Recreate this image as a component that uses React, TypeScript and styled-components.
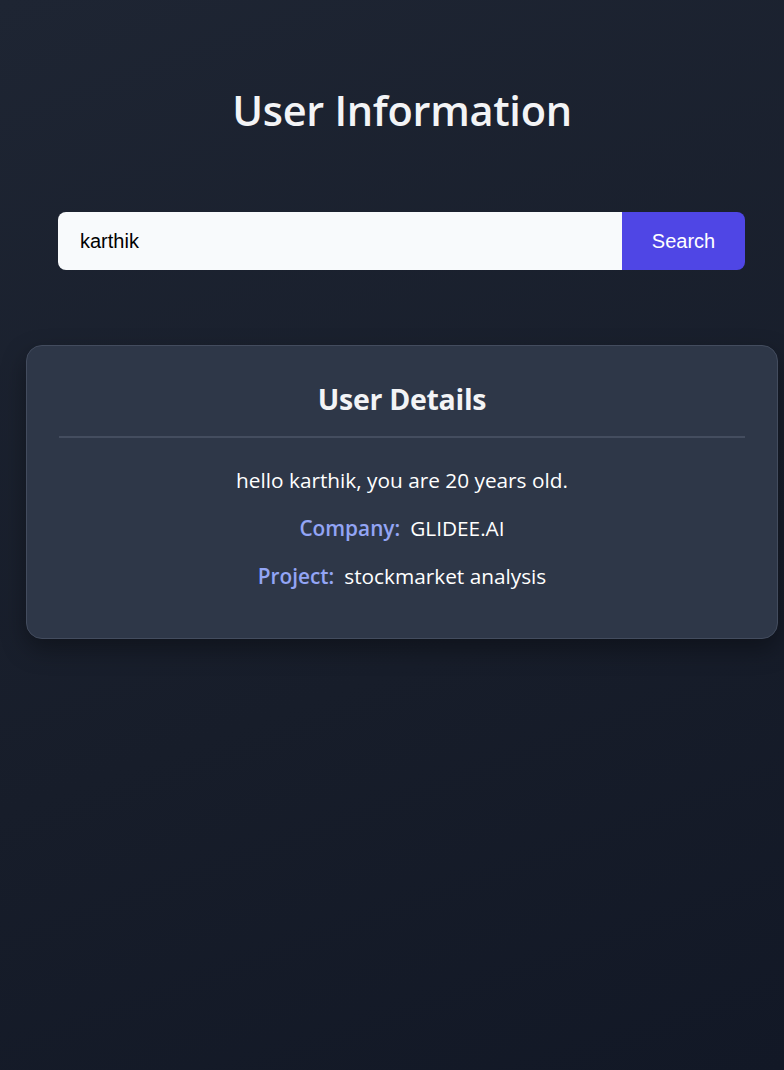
import styled, { createGlobalStyle } from "styled-components";
import { useState } from "react";

const GlobalStyle = createGlobalStyle`
  html, body {
    margin: 0;
    padding: 0;
  }
  body {
    min-height: 1070px;
    background: linear-gradient(160deg, #1e2533 0%, #171d2a 60%, #121826 100%);
    font-family: "Open Sans", "Noto Sans", sans-serif;
    color: #f3f4f6;
  }
`;

const Page = styled.div`
  width: 752px;
  margin-left: 26px;
  padding-top: 84px;
`;

const Title = styled.h1`
  margin: 0;
  text-align: center;
  font-size: 41.5px;
  font-weight: 600;
  line-height: 52px;
  color: #f3f4f6;
  letter-spacing: -0.3px;
`;

const SearchForm = styled.form`
  display: flex;
  height: 58px;
  margin: 76px 33px 0 32px;
  border-radius: 8px;
  overflow: hidden;
`;

const SearchInput = styled.input`
  flex: 1;
  border: 0;
  outline: none;
  background-color: #f8fafc;
  padding: 0 22px;
  font-family: "Liberation Sans", Arial, sans-serif;
  font-size: 20px;
  color: #000;
`;

const SearchButton = styled.button`
  width: 123px;
  border: 0;
  background-color: #4f46e5;
  color: #ffffff;
  font-family: "Liberation Sans", Arial, sans-serif;
  font-size: 20px;
  cursor: pointer;
`;

const Card = styled.div`
  margin-top: 75px;
  background-color: #2e3748;
  border: 1px solid #434c5e;
  border-radius: 16px;
  padding: 30px 32px 46px;
  box-shadow: 0 10px 24px rgba(0, 0, 0, 0.35);
`;

const CardTitle = styled.h2`
  margin: 0;
  text-align: center;
  font-size: 28.5px;
  font-weight: 700;
  line-height: 46px;
  padding-bottom: 14px;
  border-bottom: 2px solid #444d5f;
  letter-spacing: -0.3px;
`;

const Line = styled.p<{ $first?: boolean }>`
  margin: ${(p) => (p.$first ? "26px" : "16px")} 0 0;
  text-align: center;
  font-size: 20.8px;
  line-height: 32px;
  color: #ffffff;
`;

const Label = styled.span`
  color: #93a5f5;
  font-weight: 600;
  margin-right: 10px;
`;

const App = () => {
  const [name, setName] = useState("karthik");

  return (
    <>
      <GlobalStyle />
      <Page>
        <Title>User Information</Title>
        <SearchForm onSubmit={(e) => e.preventDefault()}>
          <SearchInput value={name} onChange={(e) => setName(e.target.value)} />
          <SearchButton type="submit">Search</SearchButton>
        </SearchForm>
        <Card>
          <CardTitle>User Details</CardTitle>
          <Line $first>hello karthik, you are 20 years old.</Line>
          <Line>
            <Label>Company:</Label>GLIDEE.AI
          </Line>
          <Line>
            <Label>Project:</Label>stockmarket analysis
          </Line>
        </Card>
      </Page>
    </>
  );
};

export default App;
